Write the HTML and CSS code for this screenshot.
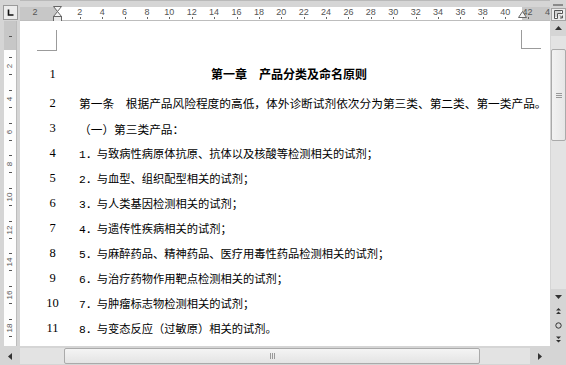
FILE: index.html
```html
<!DOCTYPE html>
<html lang="zh-CN">
<head>
<meta charset="utf-8">
<title>第一章 产品分类及命名原则</title>
<link rel="stylesheet" href="styles.css">
</head>
<body>
<div class="app">
  <div class="tabsel">
    <div class="tabbox">
      <svg width="9" height="9" viewBox="0 0 9 9"><path d="M2.5 1.5v5.5h5" fill="none" stroke="#111" stroke-width="1.6"/></svg>
    </div>
  </div>

  <div class="hruler">
    <div class="hr-band">
      <div class="hr-scale">
        <span>2</span><span></span><span>2</span><span>4</span><span>6</span><span>8</span><span>10</span><span>12</span><span>14</span><span>16</span><span>18</span><span>20</span><span>22</span><span>24</span><span>26</span><span>28</span><span>30</span><span>32</span><span>34</span><span>36</span><span>38</span><span>40</span><span>42</span><span>44</span>
      </div>
    </div>
    <svg class="indent-l" width="9" height="16" viewBox="0 0 9 16">
      <path d="M0.5 0.5h8L4.5 5.5z" fill="#f4f4f4" stroke="#666"/>
      <path d="M4.5 5.5L8.5 10.5h-8z" fill="#f4f4f4" stroke="#666"/>
      <rect x="0.5" y="10.5" width="8" height="5" fill="#e8e8e8" stroke="#666"/>
    </svg>
    <svg class="indent-r" width="9" height="7" viewBox="0 0 9 7">
      <path d="M4.5 0.5L8.5 6.5h-8z" fill="#f4f4f4" stroke="#666"/>
    </svg>
  </div>

  <div class="topright">
    <div class="splitbar"></div>
    <div class="rulerbtn">
      <svg width="11" height="11" viewBox="0 0 11 11">
        <path d="M1.5 1.5h8v3h-5v5h-3z" fill="#fff" stroke="#555"/>
        <path d="M3 2.5v1M5 2.5v1M7 2.5v1M2.5 5h1M2.5 7h1" stroke="#555"/>
        <path d="M7 6.5l2.5 2.5M9.5 6.5v2.5h-2.5" fill="none" stroke="#555"/>
      </svg>
    </div>
  </div>

  <div class="vruler">
    <div class="vr-band">
      <div class="vr-margin"><i class="tk"></i></div>
      <div class="vr-scale">
        <div class="vc"><i class="tk"></i><b>2</b><i class="tk"></i></div>
        <div class="vc"><i class="tk"></i><b>4</b><i class="tk"></i></div>
        <div class="vc"><i class="tk"></i><b>6</b><i class="tk"></i></div>
        <div class="vc"><i class="tk"></i><b>8</b><i class="tk"></i></div>
        <div class="vc"><i class="tk"></i><b>10</b><i class="tk"></i></div>
        <div class="vc"><i class="tk"></i><b>12</b><i class="tk"></i></div>
        <div class="vc"><i class="tk"></i><b>14</b><i class="tk"></i></div>
        <div class="vc"><i class="tk"></i><b>16</b><i class="tk"></i></div>
        <div class="vc"><i class="tk"></i><b>18</b><i class="tk"></i></div>
      </div>
    </div>
  </div>

  <div class="page">
    <span class="crop crop-tl"></span>
    <span class="crop crop-tr"></span>
    <div class="rows">
      <div class="row row-title"><span class="ln">1</span><span class="tx title">第一章　产品分类及命名原则</span></div>
      <div class="row row-lead"><span class="ln">2</span><span class="tx big">第一条　根据产品风险程度的高低，体外诊断试剂依次分为第三类、第二类、第一类产品。</span></div>
      <div class="row"><span class="ln">3</span><span class="tx big">（一）第三类产品：</span></div>
      <div class="row"><span class="ln">4</span><span class="tx"><span class="num">1．</span>与致病性病原体抗原、抗体以及核酸等检测相关的试剂；</span></div>
      <div class="row"><span class="ln">5</span><span class="tx"><span class="num">2．</span>与血型、组织配型相关的试剂；</span></div>
      <div class="row"><span class="ln">6</span><span class="tx"><span class="num">3．</span>与人类基因检测相关的试剂；</span></div>
      <div class="row"><span class="ln">7</span><span class="tx"><span class="num">4．</span>与遗传性疾病相关的试剂；</span></div>
      <div class="row"><span class="ln">8</span><span class="tx"><span class="num">5．</span>与麻醉药品、精神药品、医疗用毒性药品检测相关的试剂；</span></div>
      <div class="row"><span class="ln">9</span><span class="tx"><span class="num">6．</span>与治疗药物作用靶点检测相关的试剂；</span></div>
      <div class="row"><span class="ln">10</span><span class="tx"><span class="num">7．</span>与肿瘤标志物检测相关的试剂；</span></div>
      <div class="row"><span class="ln">11</span><span class="tx"><span class="num">8．</span>与变态反应（过敏原）相关的试剂。</span></div>
    </div>
  </div>

  <div class="vscroll">
    <div class="sbtn"><svg width="7" height="4" viewBox="0 0 7 4"><path d="M3.5 0L7 4H0z" fill="#333"/></svg></div>
    <div class="vtrack">
      <div class="vthumb"><span class="grip-h"></span></div>
    </div>
    <div class="sbtn"><svg width="7" height="4" viewBox="0 0 7 4"><path d="M0 0h7L3.5 4z" fill="#333"/></svg></div>
    <div class="sbtn"><svg width="7" height="7" viewBox="0 0 7 7"><path d="M3.5 0L6 2.5H1zM3.5 3.5L6 6H1z" fill="#333"/></svg></div>
    <div class="sbtn"><svg width="7" height="7" viewBox="0 0 7 7"><circle cx="3.5" cy="3.5" r="2.7" fill="none" stroke="#333"/></svg></div>
    <div class="sbtn"><svg width="7" height="7" viewBox="0 0 7 7"><path d="M1 0.5h5L3.5 3zM1 4h5L3.5 6.5z" fill="#333"/></svg></div>
  </div>

  <div class="hscroll">
    <div class="hbtn"><svg width="4" height="7" viewBox="0 0 4 7"><path d="M4 0v7L0 3.5z" fill="#333"/></svg></div>
    <div class="htrack">
      <div class="hthumb"><span class="grip-v"></span></div>
    </div>
    <div class="hbtn"><svg width="4" height="7" viewBox="0 0 4 7"><path d="M0 0v7l4-3.5z" fill="#333"/></svg></div>
  </div>
  <div class="corner"></div>
</div>
</body>
</html>
```

FILE: styles.css
```css
* { box-sizing: border-box; }
html, body { margin: 0; padding: 0; }
body {
  width: 566px;
  height: 365px;
  overflow: hidden;
  background: #d6d6d6;
  font-family: "Noto Sans CJK SC", "Noto Sans", sans-serif;
}
.app {
  width: 566px;
  height: 365px;
  display: grid;
  grid-template-columns: 20px 530px 16px;
  grid-template-rows: 21px 325px 19px;
  background: #d5d5d5;
}

/* tab selector */
.tabsel { padding: 5px 2px 0 3px; background: #d5d5d5; }
.tabbox {
  width: 15px; height: 15px;
  border: 1px solid #9a9a9a;
  background: #ececec;
  display: flex; align-items: center; justify-content: center;
}

/* horizontal ruler */
.hruler {
  position: relative;
  padding-top: 6px;
  background: #d5d5d5;
  border-top: 1px solid #b9b9b9;
}
.hr-band {
  height: 14px;
  background: linear-gradient(to right, #c7c7c7 0, #c7c7c7 37px, #ffffff 37px, #ffffff 502px, #c7c7c7 502px);
  border-bottom: 1px solid #bdbdbd;
  overflow: hidden;
}
.hr-scale {
  display: flex;
  padding-left: 3.8px;
  height: 100%;
}
.hr-scale span {
  flex: 0 0 22.4px;
  text-align: center;
  font-family: "Liberation Sans", sans-serif;
  font-size: 9px;
  line-height: 10px;
  color: #555;
  position: relative;
}
.hr-scale span::after {
  content: "";
  position: absolute;
  left: 50%;
  top: 10px;
  width: 1px;
  height: 2px;
  background: #666;
}
.hr-scale span:first-child::after,
.hr-scale span:nth-child(2)::after { display: none; }
.indent-l { position: absolute; left: 33px; top: 5px; }
.indent-r { position: absolute; left: 498px; top: 10px; }

/* top right */
.topright {
  display: flex; flex-direction: column; align-items: center;
  background: #d5d5d5;
}
.splitbar { width: 10px; height: 2px; margin-top: 4px; background: #8a8a8a; }
.rulerbtn {
  margin-top: 2px;
  width: 15px; height: 13px;
  border: 1px solid #a5a5a5;
  background: #ececec;
  display: flex; align-items: center; justify-content: center;
}

/* vertical ruler */
.vruler {
  padding: 0 3px 0 4px;
  background: #d5d5d5;
}
.vr-band {
  height: 100%;
  width: 13px;
  background: #fdfdfd;
  border-right: 1px solid #bcbcbc;
  overflow: hidden;
}
.vr-margin {
  height: 29px;
  background: #c7c7c7;
  display: flex; flex-direction: column; align-items: center;
  padding-top: 15px;
}
.vr-scale { display: flex; flex-direction: column; padding-top: 0; }
.vc {
  flex: 0 0 32.7px;
  height: 32.7px;
  display: flex; flex-direction: column; align-items: center; justify-content: center;
  gap: 4px;
}
.tk { display: block; width: 3px; height: 1px; background: #555; }
.vc b {
  font-weight: normal;
  font-family: "Liberation Sans", sans-serif;
  font-size: 8px;
  line-height: 8px;
  color: #555;
  transform: rotate(-90deg);
  height: 8px;
  display: flex; align-items: center; justify-content: center;
}

/* page */
.page {
  position: relative;
  background: #ffffff;
  padding-top: 37px;
  overflow: hidden;
}
.crop { position: absolute; border-color: #9b9b9b; border-style: solid; }
.crop-tl { left: 17px; top: 9px; width: 20px; height: 21px; border-width: 0 1px 1px 0; }
.crop-tr { left: 501px; top: 9px; width: 20px; height: 19px; border-width: 0 0 1px 1px; }

.rows { display: flex; flex-direction: column; }
.row {
  display: flex;
  height: 25px;
  align-items: center;
  white-space: nowrap;
  color: #000;
}
.row-title { height: 32px; }
.row-lead { height: 26px; }
.ln {
  flex: 0 0 59px;
  padding-left: 6px;
  text-align: center;
  font-family: "Liberation Serif", serif;
  font-size: 12.5px;
}
.tx {
  font-size: 11.25px;
  line-height: 14px;
}
.tx.big { font-size: 11.7px; }
.title {
  flex: 0 0 420px;
  text-align: center;
  font-weight: bold;
  font-size: 12px;
}
.num { font-family: "Liberation Mono", monospace; }

/* vertical scrollbar */
.vscroll {
  display: flex; flex-direction: column;
  background: #d5d5d5;
  padding-left: 1px;
}
.sbtn {
  height: 14px;
  display: flex; align-items: center; justify-content: center;
}
.vtrack {
  flex: 1;
  background: #e3e3e3;
  padding-top: 13px;
  margin: 1px 0;
}
.vthumb {
  height: 92px;
  background: linear-gradient(to right, #f2f2f2, #e6e6e6);
  border: 1px solid #aaaaaa;
  border-radius: 2px;
  display: flex; align-items: center; justify-content: center;
}
.grip-h { width: 6px; height: 5px; border-top: 1px solid #999; border-bottom: 1px solid #999; position: relative; }
.grip-h::after { content: ""; position: absolute; left: 0; right: 0; top: 1px; height: 1px; background: #999; }

/* horizontal scrollbar */
.hscroll {
  grid-column: 1 / 3;
  display: flex;
  align-items: stretch;
  padding: 2px 0 1px;
  background: #d5d5d5;
}
.hbtn {
  flex: 0 0 20px;
  display: flex; align-items: center; justify-content: center;
}
.htrack {
  flex: 1;
  background: #e3e3e3;
  padding-left: 44px;
  padding-right: 50px;
  display: flex;
}
.hthumb {
  flex: 1;
  background: linear-gradient(to bottom, #f4f4f4, #e4e4e4);
  border: 1px solid #aaaaaa;
  border-radius: 2px;
  display: flex; align-items: center; justify-content: center;
}
.grip-v { width: 5px; height: 6px; border-left: 1px solid #999; border-right: 1px solid #999; position: relative; }
.grip-v::after { content: ""; position: absolute; top: 0; bottom: 0; left: 1px; width: 1px; background: #999; }
.corner { background: #d5d5d5; }
```
